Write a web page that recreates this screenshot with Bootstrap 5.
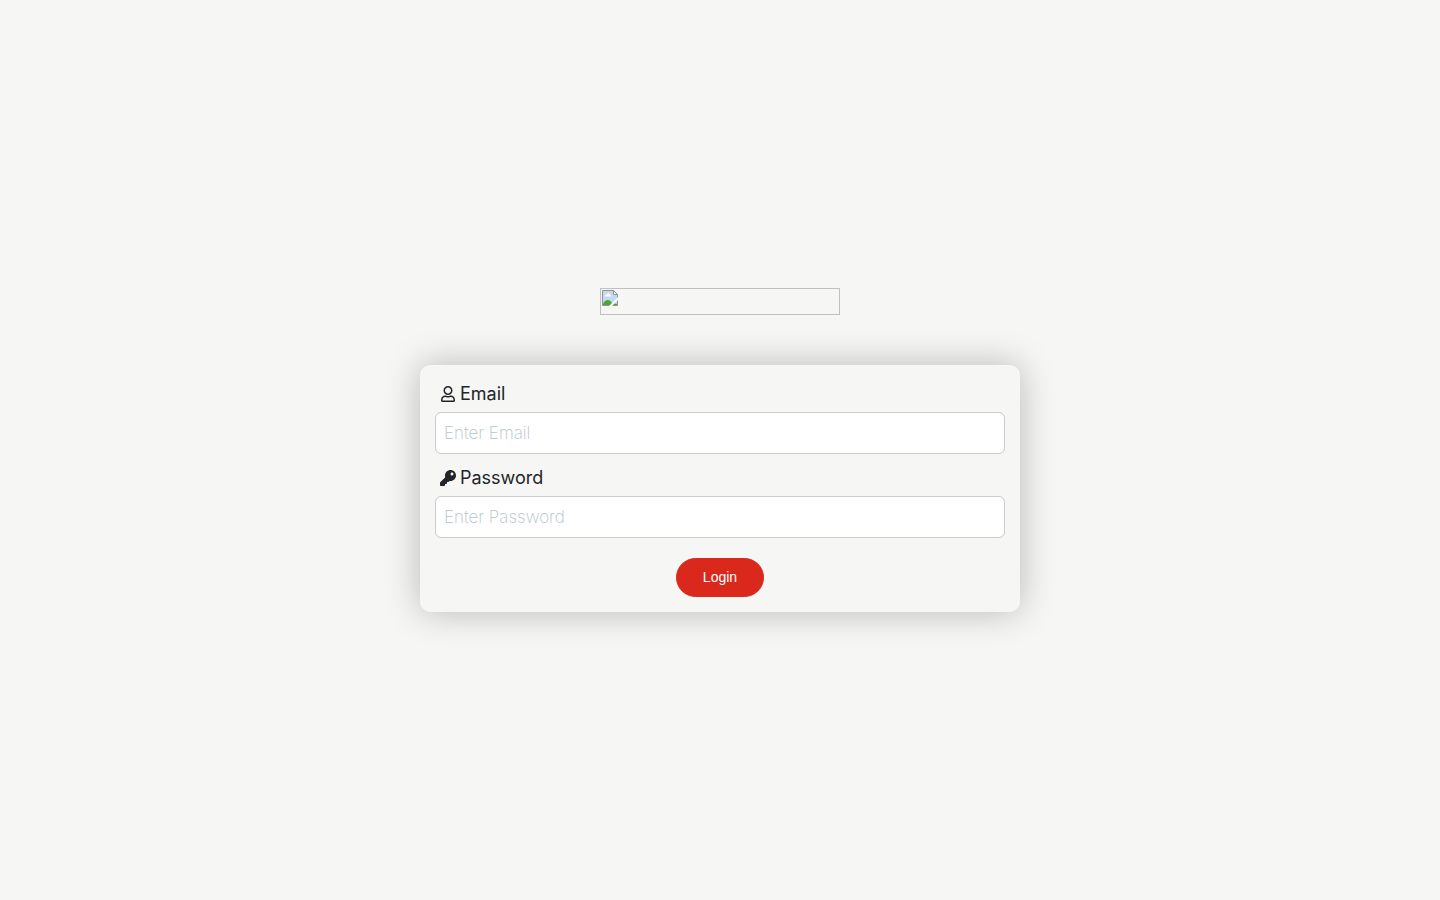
<!DOCTYPE html>
<html lang="en">
<head>
<meta charset="utf-8">
<meta name="viewport" content="width=device-width, initial-scale=1">
<title>Login</title>
<link rel="stylesheet" href="https://cdn.jsdelivr.net/npm/bootstrap@5.3.0/dist/css/bootstrap.min.css">
<style>
  body { background: #f6f6f4; color: #212529; font-family: Inter, "Open Sans", sans-serif; }
  .logo-frame { width: 240px; height: 27px; border: 1px solid #c0c0c0; padding: 1px; margin-bottom: 50px; }
  .login-panel { max-width: 600px; padding: 15px; border-radius: 10px; background: #f6f6f4; box-shadow: 0 0 35px rgba(0, 0, 0, .25); }
  .field-label { font-size: 18px; line-height: 27px; font-weight: 400; padding-left: 5px; margin-bottom: 5px; gap: 4px; }
  .field-label svg { width: 16px; height: 16px; }
  .form-control + .field-label { margin-top: 10px; }
  .login-panel .form-control { height: 42px; padding: 0 8px; border: 1px solid #ccc; border-radius: 6px; font-size: 17px; font-weight: 200; }
  .login-panel .form-control::placeholder { color: #b5c3c9; opacity: 1; }
  .btn-login { --bs-btn-color: #fff; --bs-btn-bg: #da291c; --bs-btn-border-color: #da291c; --bs-btn-hover-color: #fff; --bs-btn-hover-bg: #b92217; --bs-btn-hover-border-color: #b92217;
    width: 88px; height: 39px; padding: 0; font-family: "Liberation Sans", Arial, sans-serif; font-size: 14px; }
</style>
</head>
<body>
<main class="container-fluid min-vh-100 d-flex flex-column align-items-center justify-content-center">
  <div class="logo-frame d-flex" role="img" aria-label="Logo">
    <svg width="16" height="16" viewBox="0 0 16 16" aria-hidden="true">
      <path fill="#c3d7f6" d="M1 1h10v4h4v10H1z"/>
      <path fill="#fff" d="M2.500 6.500c0-2 2-1.500 2.500-2.500 1-1.500 3-.5 3 1 1.500 0 1.500 1.500.5 1.500zM11 1l4 4h-4z"/>
      <path fill="#4aa832" d="M1 14c2-5 7-5 9-1l5 1v1H1z"/>
      <path fill="none" stroke="#919191" d="M15.500 4.500v11H.5V.5h11l4 4h-4v-4"/>
      <path fill="#f6f6f4" d="M16 7v3l-6 6H7z"/>
    </svg>
  </div>
  <form class="login-panel w-100" onsubmit="return false">
    <label class="field-label d-flex align-items-center" for="email">
      <svg viewBox="-32 0 512 512" fill="currentColor" aria-hidden="true"><path d="M313.600 304c-28.700 0-42.500 16-89.600 16-47.100 0-60.800-16-89.600-16C60.200 304 0 364.200 0 438.400V464c0 26.500 21.500 48 48 48h352c26.500 0 48-21.500 48-48v-25.600c0-74.200-60.200-134.400-134.400-134.400zM400 464H48v-25.600c0-47.600 38.800-86.400 86.400-86.400 14.600 0 38.300 16 89.600 16 51.700 0 74.900-16 89.600-16 47.600 0 86.400 38.800 86.400 86.400V464zM224 288c79.500 0 144-64.500 144-144S303.500 0 224 0 80 64.500 80 144s64.500 144 144 144zm0-240c52.900 0 96 43.100 96 96s-43.100 96-96 96-96-43.100-96-96 43.100-96 96-96z"/></svg>
      <span>Email</span>
    </label>
    <input class="form-control" type="email" id="email" placeholder="Enter Email">
    <label class="field-label d-flex align-items-center" for="password">
      <svg viewBox="0 0 512 512" fill="currentColor" aria-hidden="true"><path d="M512 176c0 97.200-78.800 176-176 176-11.220 0-22.190-1.060-32.830-3.070l-24.010 27.010A24 24 0 0 1 261.220 384H224v40c0 13.250-10.750 24-24 24h-40v40c0 13.250-10.750 24-24 24H24c-13.250 0-24-10.750-24-24v-78.060c0-6.360 2.530-12.470 7.030-16.970l161.800-161.800C163.100 213.800 160 195.270 160 176 160 78.800 238.800 0 336 0c97.490 0 176 78.510 176 176zM336 128c0 26.510 21.490 48 48 48s48-21.490 48-48-21.490-48-48-48-48 21.490-48 48z"/></svg>
      <span>Password</span>
    </label>
    <input class="form-control" type="password" id="password" placeholder="Enter Password">
    <div class="d-flex justify-content-center pt-1 mt-3">
      <button class="btn btn-login rounded-pill" type="submit">Login</button>
    </div>
  </form>
</main>
<script src="https://cdn.jsdelivr.net/npm/bootstrap@5.3.0/dist/js/bootstrap.bundle.min.js"></script>
</body>
</html>
